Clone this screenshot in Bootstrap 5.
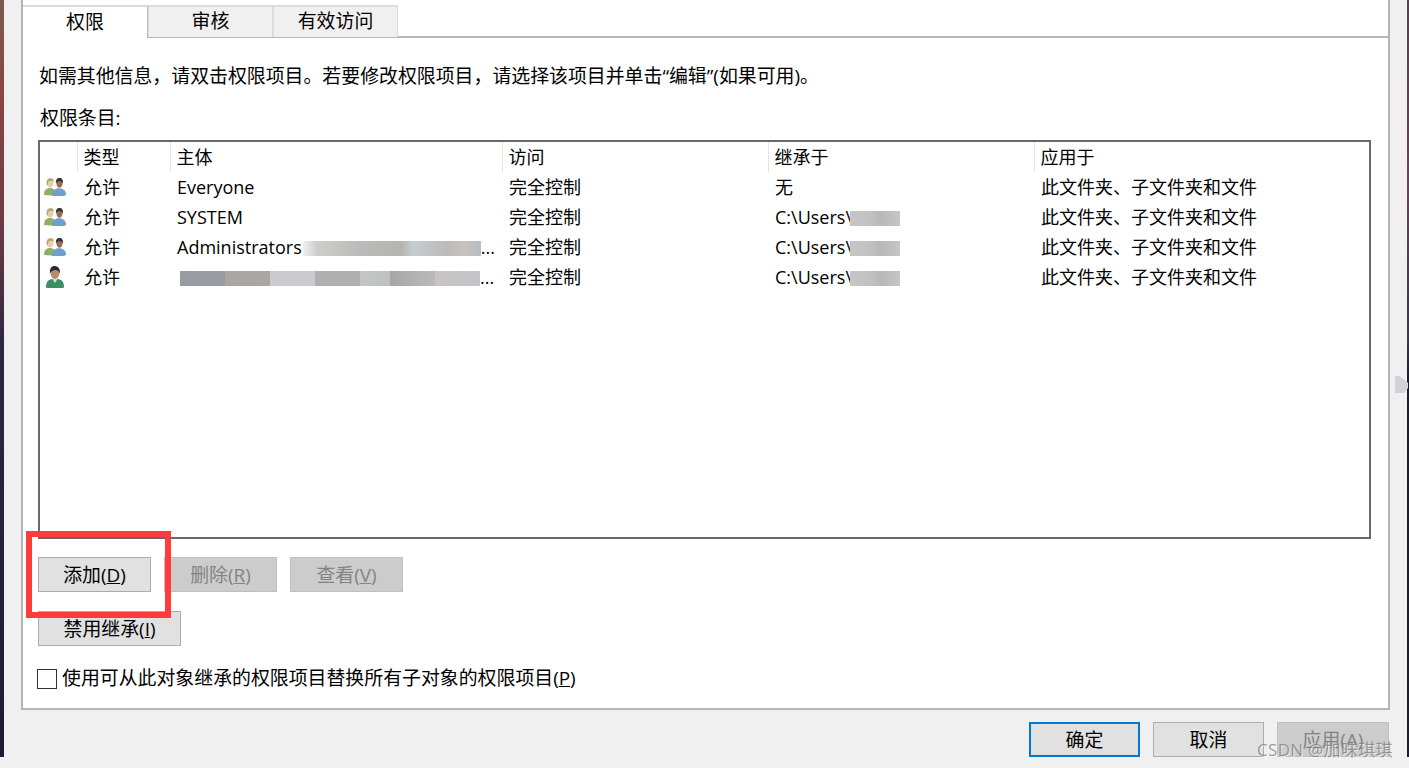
<!DOCTYPE html>
<html lang="zh-CN">
<head>
<meta charset="utf-8">
<title>权限</title>
<link rel="stylesheet" href="https://cdn.jsdelivr.net/npm/bootstrap@5.3.0/dist/css/bootstrap.min.css">
<style>
html,body{height:768px;overflow:hidden}
body{background:#f0f0f0;color:#000;font-family:"Open Sans","Noto Sans CJK SC",sans-serif;font-size:18.9px;line-height:24px}
.strip-l{width:4px;background:linear-gradient(180deg,#7a5c50 0,#8c4544 12%,#6d3a44 30%,#2e2740 45%,#1c1c30 100%)}
.strip-r{width:2px;background:linear-gradient(180deg,#5a4050 0,#6a4058 25%,#3a3550 45%,#1c1c30 50%,#1c1c30 100%)}
.dlg-main{width:1403px}
.perm-panel{margin-left:17px;margin-right:17px;height:710px;background:#fff;border:2px solid #b4b4b4;border-top:0}
.perm-tabs{padding-top:5px;height:38px;border-bottom:2px solid #b9b9b9;flex-wrap:nowrap}
.perm-tabs .nav-link{width:125px;height:32px;padding:0;margin:0;border:2px solid #dcdcdc;border-width:2px 1px 0 1px;border-radius:0;background:#f0f0f0;color:#000;text-align:center;line-height:28px}
.perm-tabs .nav-link.active{width:125px;height:33px;background:#fff;border-width:2px 1px 0 0;border-color:#dcdcdc #b9b9b9 #fff #fff;color:#000;line-height:31px;position:relative;z-index:1}
.perm-body{padding:26px 17px 0 15px}
.info-line{padding-left:1px;margin:0}
.entries-label{padding-left:2px;margin:18px 0 10px}
.entries-box{height:399px;border:2px solid #696969;background:#fff;overflow:hidden}
.entries-table{table-layout:fixed;width:1329px;margin:0;--bs-table-bg:transparent;--bs-table-color:#000;border-collapse:collapse;font-size:18px}
.entries-table th,.entries-table td{padding:0 0 0 6px;border:0;font-weight:400;height:30px;line-height:30px;white-space:nowrap;overflow:hidden;color:#000;box-shadow:none}
.entries-table th{height:30px;border-left:1px solid #e5e5e5;padding-top:0}
.entries-table th:first-child{border-left:0}
.entries-table td{padding-left:7px}
.entries-table td:first-child{padding:0 0 0 4px;line-height:0;vertical-align:middle}
.col-ic{width:37px}.col-ty{width:93px}.col-su{width:332px}.col-ac,.col-in{width:266px}
.ic-two{width:22px;height:18px}
.ic-one{width:18px;height:22px;margin-left:2px}
.haze{display:inline-block;height:15px;vertical-align:-2px}
.haze-a{width:178px;margin-left:1px;background:linear-gradient(90deg,#f1efec 0,#cfcdcc 8%,#bdbcbc 30%,#b6b4b0 55%,#c6ccd0 62%,#bcbbb8 80%,#c6c3bd 90%,#b8bcc4 100%)}
.haze-b{width:300px;margin-left:3px;background:linear-gradient(90deg,#9a9ca3 0,#9a9ca3 15%,#aba5a3 15%,#aba5a3 30%,#c9cbce 30%,#c9cbce 45%,#adafb0 45%,#adafb0 60%,#c6c6c4 60%,#bdbfc2 70%,#a7a6a6 70%,#b9bbbb 85%,#c9c4c2 85%,#c2c5c8 100%)}
.haze-c{width:50px;margin-left:-2px;background:linear-gradient(90deg,#c6c6c6 0,#c2c2c2 40%,#b8b8b8 60%,#c6c6c6 100%)}
.win-btn.btn{height:35px;width:113px;padding:0;border:1px solid #adadad;border-radius:0;background:#e1e1e1;color:#000;font-size:18.9px;line-height:32px;--bs-btn-hover-bg:#e1e1e1}
.win-btn.btn:disabled{background:#ccc;border-color:#bfbfbf;color:#838383;opacity:1}
.win-btn-wide.btn{width:143px}
.win-btn-ok.btn{border:2px solid #0078d7;width:111px;line-height:30px}
.win-btn-foot.btn{width:111px}
.win-btn-apply.btn{width:112px}
.btn-row-a{margin-top:18px;gap:13px}
.btn-row-b{margin-top:19px}
.chk-row{margin-top:21px;margin-left:-1px;gap:5px}
.chk-row .form-check-input{width:20px;height:20px;margin:2px 0 0;border:1px solid #333;border-radius:0;flex:none}
.chk-row label{line-height:22px}
.foot-row{padding:12px 18px 0 0;gap:13px}
.red-mark{position:absolute;left:26px;top:531px;width:145px;height:87px;border:6px solid #ff3b3b;pointer-events:none}
.side-arrow{position:absolute;left:1395px;top:376px;width:13px;height:17px;background:#d3d3d5;clip-path:polygon(0 0,35% 0,100% 40%,100% 70%,70% 100%,0 100%)}
.wm{position:absolute;left:1257px;top:738px;color:rgba(125,125,125,.75);text-shadow:1px 1px 0 rgba(255,255,255,.6);letter-spacing:.3px;white-space:nowrap;font-size:17px}
</style>
</head>
<body class="position-relative m-0">
<svg width="0" height="0" class="position-absolute">
  <symbol id="two" viewBox="0 0 22 18">
    <path d="M0 17c0-5 2.500-7 6-7s6 2 6 7l-5 .5z" fill="#8db163"/>
    <path d="M3 6c-.6-3 1-5.500 3.400-5.500S10 3 9.300 6c-.3 2-1.600 3.500-3 3.500S3.300 8 3 6z" fill="#e3cfab"/>
    <path d="M2.800 7C2 3 3.500.3 6.400.3S10 2 9.600 3.500C8 2.500 5.500 2.600 4.400 3.600 4 4.600 4 6 3.800 7.500z" fill="#b5a673"/>
    <path d="M8 18c0-5.500 3-7.700 7-7.700s7 2.200 7 6.700c-1 .6-2 1-3 1z" fill="#6f9fcf"/>
    <path d="M12.500 6c-.3-3 .8-5.500 3-5.500s3.200 2.500 3 5.500c-.2 2-1.500 3.800-3 3.800s-2.800-1.800-3-3.800z" fill="#9c6c4e"/>
    <path d="M12 5.500C11.400 2 13 0 15.500 0s4 2 3.400 5.500c-.7-1.600-2-2.600-3.400-2.600s-2.800 1-3.500 2.600z" fill="#34343a"/>
  </symbol>
  <symbol id="one" viewBox="0 0 18 22">
    <path d="M0 21.500c0-6 2.500-8.700 9-8.700s9 2.700 9 8.700c-1 .5-3 .5-9 .5s-8 0-9-.5z" fill="#3f8c68"/>
    <path d="M6.500 13l2.500 4 2.500-4z" fill="#cfe3d6"/>
    <path d="M4.500 7c-.3-3.500 1.600-5.500 4.500-5.500S13.800 3.500 13.500 7c-.2 3-2.200 6-4.500 6S4.700 10 4.500 7z" fill="#b98d6c"/>
    <path d="M4 7.500C3.300 2.500 5.500 0 8.500 0s6 2 5.300 7.500c-.6-1.800-2-3.500-4.300-3.500-2 0-4.600 1.300-5.500 3.500z" fill="#2c2a2a"/>
  </symbol>
</svg>

<div class="d-flex">
  <div class="strip-l flex-shrink-0"></div>
  <div class="dlg-main flex-shrink-0">
    <div class="perm-panel d-flex flex-column">
      <ul class="nav nav-tabs perm-tabs">
        <li class="nav-item"><a class="nav-link active" href="#">权限</a></li>
        <li class="nav-item"><a class="nav-link" href="#">审核</a></li>
        <li class="nav-item"><a class="nav-link" href="#">有效访问</a></li>
      </ul>
      <div class="perm-body">
        <p class="info-line">如需其他信息，请双击权限项目。若要修改权限项目，请选择该项目并单击“编辑”(如果可用)。</p>
        <p class="entries-label">权限条目:</p>
        <div class="entries-box">
          <table class="table entries-table">
            <colgroup><col class="col-ic"><col class="col-ty"><col class="col-su"><col class="col-ac"><col class="col-in"><col></colgroup>
            <thead><tr><th></th><th>类型</th><th>主体</th><th>访问</th><th>继承于</th><th>应用于</th></tr></thead>
            <tbody>
              <tr><td><svg class="ic-two"><use href="#two"/></svg></td><td>允许</td><td>Everyone</td><td>完全控制</td><td>无</td><td>此文件夹、子文件夹和文件</td></tr>
              <tr><td><svg class="ic-two"><use href="#two"/></svg></td><td>允许</td><td>SYSTEM</td><td>完全控制</td><td>C:\Users\<span class="haze haze-c"></span></td><td>此文件夹、子文件夹和文件</td></tr>
              <tr><td><svg class="ic-two"><use href="#two"/></svg></td><td>允许</td><td>Administrators<span class="haze haze-a"></span>...</td><td>完全控制</td><td>C:\Users\<span class="haze haze-c"></span></td><td>此文件夹、子文件夹和文件</td></tr>
              <tr><td><svg class="ic-one"><use href="#one"/></svg></td><td>允许</td><td><span class="haze haze-b"></span>...</td><td>完全控制</td><td>C:\Users\<span class="haze haze-c"></span></td><td>此文件夹、子文件夹和文件</td></tr>
            </tbody>
          </table>
        </div>
        <div class="d-flex btn-row-a">
          <button class="btn win-btn" type="button">添加(<u>D</u>)</button>
          <button class="btn win-btn" type="button" disabled>删除(<u>R</u>)</button>
          <button class="btn win-btn" type="button" disabled>查看(<u>V</u>)</button>
        </div>
        <div class="d-flex btn-row-b">
          <button class="btn win-btn win-btn-wide" type="button">禁用继承(<u>I</u>)</button>
        </div>
        <div class="d-flex align-items-start chk-row">
          <input class="form-check-input" type="checkbox" id="rep">
          <label for="rep">使用可从此对象继承的权限项目替换所有子对象的权限项目(<u>P</u>)</label>
        </div>
      </div>
    </div>
    <div class="d-flex justify-content-end foot-row">
      <button class="btn win-btn win-btn-ok" type="button">确定</button>
      <button class="btn win-btn win-btn-foot" type="button">取消</button>
      <button class="btn win-btn win-btn-apply" type="button" disabled>应用(A)</button>
    </div>
  </div>
  <div class="strip-r flex-shrink-0"></div>
</div>

<div class="red-mark"></div>
<div class="side-arrow"></div>
<div class="wm">CSDN @加味琪琪</div>
<script src="https://cdn.jsdelivr.net/npm/bootstrap@5.3.0/dist/js/bootstrap.bundle.min.js"></script>
</body>
</html>
